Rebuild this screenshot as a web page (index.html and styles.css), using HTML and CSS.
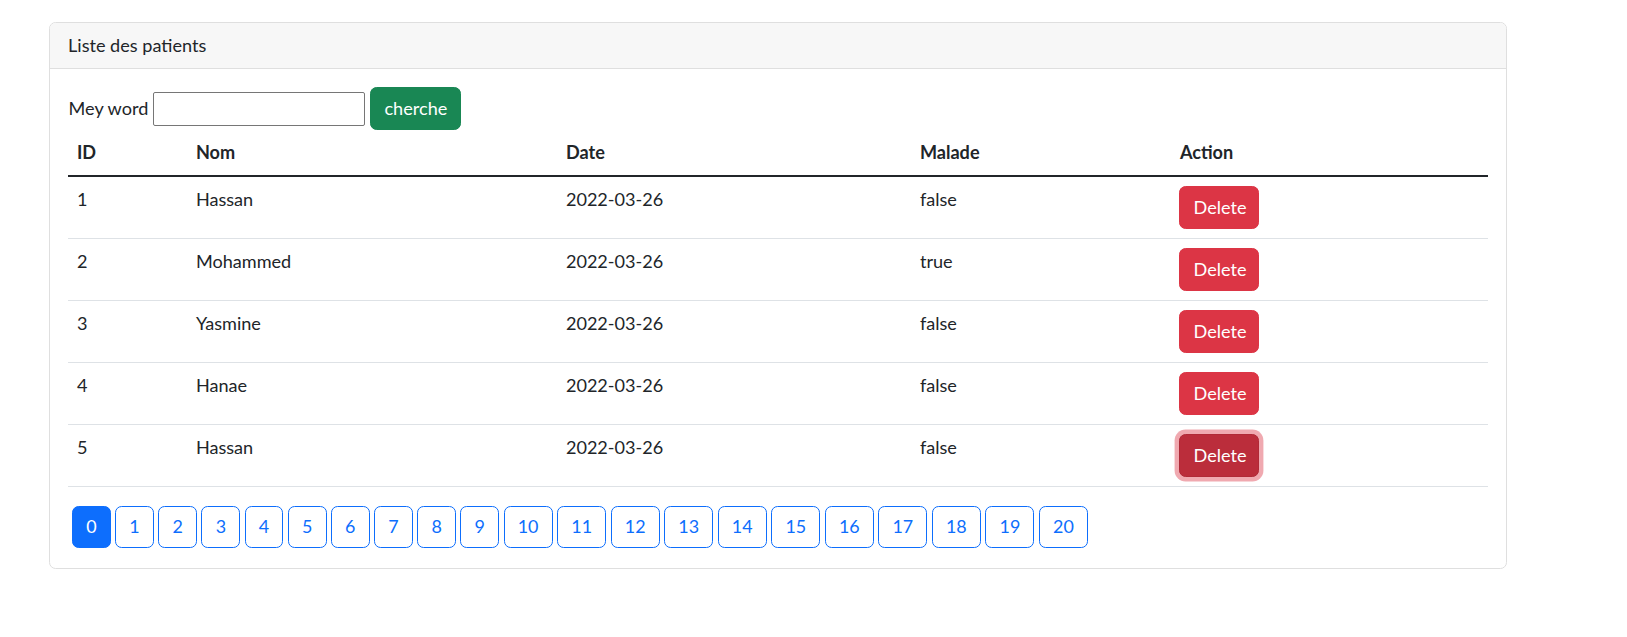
FILE: index.html
```html
<!DOCTYPE html>
<html lang="fr">
<head>
<meta charset="utf-8">
<title>Liste des patients</title>
<link rel="stylesheet" href="styles.css">
</head>
<body>
<div class="card">
  <div class="card-header">Liste des patients</div>
  <div class="card-body">
    <form class="search">
      <label class="search-label">Mey word</label>
      <input class="search-input" type="text">
      <button class="btn btn-success" type="button">cherche</button>
    </form>
    <table class="table">
      <colgroup>
        <col class="c-id"><col class="c-nom"><col class="c-date"><col class="c-malade"><col class="c-action">
      </colgroup>
      <thead>
        <tr><th>ID</th><th>Nom</th><th>Date</th><th>Malade</th><th>Action</th></tr>
      </thead>
      <tbody>
        <tr><td>1</td><td>Hassan</td><td>2022-03-26</td><td>false</td><td><button class="btn btn-danger" type="button">Delete</button></td></tr>
        <tr><td>2</td><td>Mohammed</td><td>2022-03-26</td><td>true</td><td><button class="btn btn-danger" type="button">Delete</button></td></tr>
        <tr><td>3</td><td>Yasmine</td><td>2022-03-26</td><td>false</td><td><button class="btn btn-danger" type="button">Delete</button></td></tr>
        <tr><td>4</td><td>Hanae</td><td>2022-03-26</td><td>false</td><td><button class="btn btn-danger" type="button">Delete</button></td></tr>
        <tr><td>5</td><td>Hassan</td><td>2022-03-26</td><td>false</td><td><button class="btn btn-danger btn-focus" type="button">Delete</button></td></tr>
      </tbody>
    </table>
    <ul class="pages">
      <li><a class="page active">0</a></li>
      <li><a class="page">1</a></li>
      <li><a class="page">2</a></li>
      <li><a class="page">3</a></li>
      <li><a class="page">4</a></li>
      <li><a class="page">5</a></li>
      <li><a class="page">6</a></li>
      <li><a class="page">7</a></li>
      <li><a class="page">8</a></li>
      <li><a class="page">9</a></li>
      <li><a class="page">10</a></li>
      <li><a class="page">11</a></li>
      <li><a class="page">12</a></li>
      <li><a class="page">13</a></li>
      <li><a class="page">14</a></li>
      <li><a class="page">15</a></li>
      <li><a class="page">16</a></li>
      <li><a class="page">17</a></li>
      <li><a class="page">18</a></li>
      <li><a class="page">19</a></li>
      <li><a class="page">20</a></li>
    </ul>
  </div>
</div>
</body>
</html>
```
FILE: styles.css
```css
* { box-sizing: border-box; }

html, body {
  margin: 0;
  padding: 0;
  background: #ffffff;
}

body {
  font-family: "Segoe UI", Lato, "Noto Sans", sans-serif;
  font-size: 18.1px;
  line-height: 26.4px;
  color: #212529;
}

.card {
  margin: 22px 0 0 49px;
  width: 1458px;
  border: 1px solid #dfdfdf;
  border-radius: 6.6px;
  background: #fff;
}

.card-header {
  padding: 9.4px 17.6px 9.4px 18px;
  background: #f7f7f7;
  border-bottom: 1px solid #dfdfdf;
  border-radius: 5.6px 5.6px 0 0;
}

.card-body {
  padding: 17.6px 17.6px 20px 17.6px;
}

.search {
  display: flex;
  align-items: center;
  gap: 5px;
  margin: 0.4px 0 0 1px;
  height: 43px;
}

.search-input {
  width: 212px;
  height: 34px;
  border: 1px solid #767676;
  border-radius: 2px;
  font: inherit;
  padding: 1px 3px;
}

.btn {
  display: inline-block;
  font: inherit;
  padding: 7.3px 13.2px;
  border: 1px solid transparent;
  border-radius: 6.6px;
  color: #fff;
  cursor: pointer;
  height: 43px;
}

.btn-success {
  background: #198754;
  border-color: #198754;
  width: 91px;
}

.btn-danger {
  background: #dc3545;
  border-color: #dc3545;
  width: 80px;
}

.btn-focus {
  background: #bb2d3b;
  border-color: #b02a37;
  box-shadow: 0 0 0 4.4px rgba(225, 83, 97, 0.5);
}

.table {
  width: 1420px;
  table-layout: fixed;
  border-collapse: separate;
  border-spacing: 0;
  margin: 0 0 18.6px 0;
}

.c-id { width: 119px; }
.c-nom { width: 370px; }
.c-date { width: 354px; }
.c-malade { width: 260px; }
.c-action { width: 317px; }

.table th {
  text-align: left;
  font-weight: 700;
  padding: 8.8px 8.8px 8.8px 9.3px;
  height: 47px;
  border-bottom: 2px solid #212529;
  vertical-align: top;
}

.table td {
  padding: 9px 8.8px 9px 9.3px;
  height: 62px;
  border-bottom: 1px solid #dee2e6;
  vertical-align: top;
}

.table td:last-child {
  padding-left: 8.8px;
}

.pages {
  list-style: none;
  margin: 0;
  padding: 0;
  display: flex;
}

.page {
  display: block;
  margin-left: 4.4px;
  padding: 6.6px 13.2px;
  height: 42px;
  border: 1px solid #0d6efd;
  border-radius: 6.6px;
  color: #0d6efd;
  font-size: 17.9px;
  text-decoration: none;
  cursor: pointer;
}

.page.active {
  background: #0d6efd;
  color: #fff;
}
```
